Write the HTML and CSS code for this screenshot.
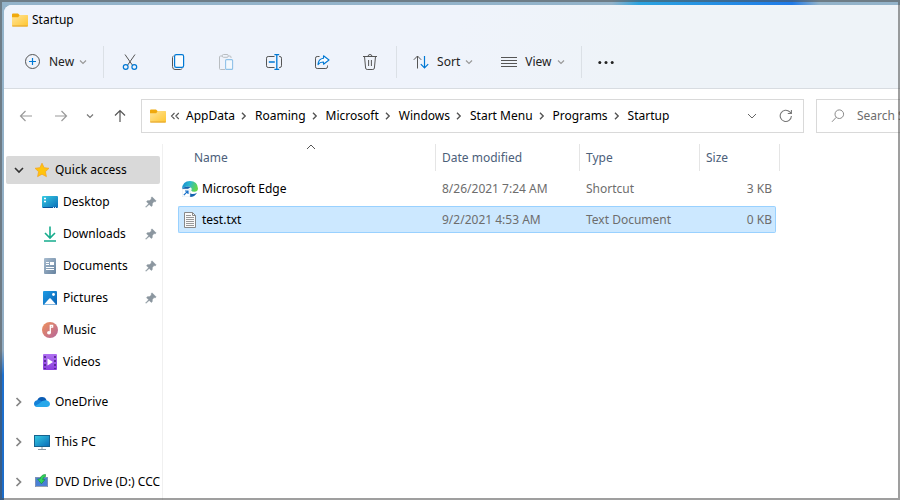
FILE: index.html
```html
<!DOCTYPE html>
<html lang="en">
<head>
    <meta charset="UTF-8">
    <meta name="viewport" content="width=device-width, initial-scale=1.0">
    <title>Startup</title>
    <link rel="stylesheet" href="styles.css">
</head>
<body>
    <svg class="defs" width="0" height="0" aria-hidden="true">
        <defs>
            <linearGradient id="folderFill" x1="0" y1="0" x2="1" y2="1">
                <stop offset="0" stop-color="#ffe49a"/><stop offset="1" stop-color="#ffc62e"/>
            </linearGradient>
            <linearGradient id="screenFill" x1="0" y1="0" x2="1" y2="1">
                <stop offset="0" stop-color="#36cbe2"/><stop offset="1" stop-color="#0a6cb8"/>
            </linearGradient>
            <linearGradient id="docFill" x1="0" y1="0" x2="1" y2="1">
                <stop offset="0" stop-color="#a9bdd0"/><stop offset="1" stop-color="#66829f"/>
            </linearGradient>
            <linearGradient id="picFill" x1="0" y1="0" x2="1" y2="1">
                <stop offset="0" stop-color="#1e9be4"/><stop offset="1" stop-color="#0a62b4"/>
            </linearGradient>
            <linearGradient id="musicFill" x1="0" y1="0" x2="1" y2="1">
                <stop offset="0" stop-color="#f0925a"/><stop offset="1" stop-color="#b4659c"/>
            </linearGradient>
            <linearGradient id="videoFill" x1="0" y1="0" x2="0" y2="1">
                <stop offset="0" stop-color="#b070f2"/><stop offset="1" stop-color="#8a3fdc"/>
            </linearGradient>
            <linearGradient id="edgeFill" x1="0" y1="0" x2="1" y2="0.3">
                <stop offset="0" stop-color="#1583d0"/><stop offset="0.5" stop-color="#2bb8cf"/><stop offset="1" stop-color="#62d64c"/>
            </linearGradient>
            <symbol id="folder" viewBox="0 0 16 14">
                <path d="M0 1.5Q0 0.5 1 0.5H6L8 2.5H15Q16 2.5 16 3.5V8H0z" fill="#f0a90c"/>
                <path d="M0 4.2H6.2L7.8 2H15Q16 2 16 3V12.5Q16 13.5 15 13.5H1Q0 13.5 0 12.5z" fill="url(#folderFill)"/>
                <path d="M0.3 13H15.7" stroke="#e2a22a" stroke-width="1"/>
            </symbol>
            <symbol id="down" viewBox="0 0 8 8">
                <path d="M1 2.5L4 5.5L7 2.5" fill="none" stroke="currentColor" stroke-width="1.2"/>
            </symbol>
            <symbol id="right" viewBox="0 0 8 8">
                <path d="M2 0.8L5.2 4L2 7.2" fill="none" stroke="currentColor" stroke-width="1.4"/>
            </symbol>
            <symbol id="pin" viewBox="0 0 12 12">
                <path d="M7 0.8L11.2 5L10.2 5.8L9 5.6L7.4 7.4L7.2 9.8L6.2 10.4L4.2 8.4L1 11.3L0.6 11L3.6 7.8L1.6 5.8L2.2 4.8L4.6 4.6L6.4 3L6.2 1.8z" fill="#8b969f" stroke="#8b969f" stroke-width="0.5"/>
            </symbol>
        </defs>
    </svg>

    <div class="window">
        <header class="top">
            <div class="title">
                <svg width="16" height="14"><use href="#folder"/></svg>
                <span>Startup</span>
            </div>
            <div class="toolbar">
                <button type="button" class="tool-menu">
                    <svg width="16" height="16" viewBox="0 0 16 16" fill="none"><circle cx="7.5" cy="7.5" r="7" stroke="#555"/><path d="M7.5 4V11M4 7.5H11" stroke="#0078d4" stroke-width="1.2"/></svg>
                    <span>New</span>
                    <svg class="chevron" width="8" height="8"><use href="#down"/></svg>
                </button>
                <span class="separator"></span>
                <div class="tools">
                    <button type="button" class="tool" aria-label="Cut">
                        <svg width="16" height="16" viewBox="0 0 16 16" fill="none"><path d="M3 0.5L10.3 11M13 0.5L5.7 11" stroke="#555"/><g stroke="#0078d4" stroke-width="1.2"><circle cx="3.7" cy="13" r="2.4"/><circle cx="12.3" cy="13" r="2.4"/></g></svg>
                    </button>
                    <button type="button" class="tool" aria-label="Copy">
                        <svg width="16" height="16" viewBox="0 0 16 16" fill="none"><path d="M3.5 2Q2.5 2.3 2.5 3.5V12.5Q2.5 15.5 5 15.5H10.5Q11.7 15.5 12 14.5" stroke="#555"/><rect x="4.6" y="0.6" width="9" height="12.8" rx="1.6" fill="#fafcfe" stroke="#0078d4" stroke-width="1.2"/></svg>
                    </button>
                    <button type="button" class="tool" aria-label="Paste" disabled>
                        <svg width="16" height="16" viewBox="0 0 16 16" fill="none"><path d="M7 15.5H2.5Q1.5 15.5 1.5 14.5V3Q1.5 2 2.5 2H4M10.5 2H12Q13 2 13 3V4" stroke="#b9bdc1"/><rect x="4.3" y="0.5" width="6" height="2.8" rx="1.2" stroke="#b9bdc1"/><rect x="7.6" y="5.6" width="7" height="9.8" rx="1" fill="#f3f8fd" stroke="#8fc1e8" stroke-width="1.1"/></svg>
                    </button>
                    <button type="button" class="tool" aria-label="Rename">
                        <svg width="16" height="16" viewBox="0 0 16 16" fill="none"><path d="M8.5 2.5H2.2Q0.5 2.5 0.5 4.2V11.8Q0.5 13.5 2.2 13.5H8.5M13 2.5H13.8Q15.5 2.5 15.5 4.2V11.8Q15.5 13.5 13.8 13.5H13" stroke="#555"/><path d="M2.8 8H8.8M10.8 0.6V15.4M8.4 0.6H13.2M8.4 15.4H13.2" stroke="#0078d4" stroke-width="1.3"/></svg>
                    </button>
                    <button type="button" class="tool" aria-label="Share">
                        <svg width="16" height="16" viewBox="0 0 16 16" fill="none"><path d="M5.5 2.5H3.2Q1.5 2.5 1.5 4.2V12.8Q1.5 14.5 3.2 14.5H11.8Q13.5 14.5 13.5 12.8V11.5" stroke="#555"/><path d="M9.5 1.8L15 6L9.5 10.2V8Q6 7.8 4 10.6Q4.3 4.9 9.5 4.2z" fill="#fafcfe" stroke="#0078d4" stroke-width="1.1" stroke-linejoin="round"/></svg>
                    </button>
                    <button type="button" class="tool" aria-label="Delete">
                        <svg width="16" height="16" viewBox="0 0 16 16" fill="none" stroke="#555"><path d="M1 2.5H15M2.5 2.5L3.6 14Q3.8 15.5 5.2 15.5H10.8Q12.2 15.5 12.4 14L13.5 2.5M6 2.3Q6.2 0.5 8 0.5Q9.8 0.5 10 2.3M6.6 6V12M9.4 6V12"/></svg>
                    </button>
                </div>
                <span class="separator"></span>
                <button type="button" class="tool-menu">
                    <svg width="16" height="16" viewBox="0 0 16 16" fill="none"><path d="M4.5 14.5V2M0.8 5.8L4.5 2L8.2 5.8" stroke="#555"/><path d="M11.5 2V14M7.8 10.2L11.5 14L15.2 10.2" stroke="#0078d4" stroke-width="1.2"/></svg>
                    <span>Sort</span>
                    <svg class="chevron" width="8" height="8"><use href="#down"/></svg>
                </button>
                <button type="button" class="tool-menu view">
                    <svg width="16" height="16" viewBox="0 0 16 16"><path d="M0 3.5H16M0 6.5H16M0 9.5H16M0 12.5H16" stroke="#555"/></svg>
                    <span>View</span>
                    <svg class="chevron" width="8" height="8"><use href="#down"/></svg>
                </button>
                <span class="separator"></span>
                <button type="button" class="tool-menu" aria-label="See more">
                    <svg width="16" height="16" viewBox="0 0 16 16" fill="#222"><circle cx="1.8" cy="8.5" r="1.5"/><circle cx="8" cy="8.5" r="1.5"/><circle cx="14.2" cy="8.5" r="1.5"/></svg>
                </button>
            </div>
        </header>

        <div class="address-row">
            <nav class="history">
                <button type="button" aria-label="Back"><svg width="14" height="14" viewBox="0 0 14 14" fill="none" stroke="#9a9a9a" stroke-width="1.2"><path d="M13 7H1.5M6.5 2L1.5 7L6.5 12"/></svg></button>
                <button type="button" aria-label="Forward"><svg width="14" height="14" viewBox="0 0 14 14" fill="none" stroke="#9a9a9a" stroke-width="1.2"><path d="M1 7H12.5M7.5 2L12.5 7L7.5 12"/></svg></button>
                <button type="button" class="recent" aria-label="Recent locations"><svg width="8" height="8"><use href="#down"/></svg></button>
                <button type="button" aria-label="Up"><svg width="14" height="14" viewBox="0 0 14 14" fill="none" stroke="#555" stroke-width="1.2"><path d="M7 13V1.5M2 6.5L7 1.5L12 6.5"/></svg></button>
            </nav>
            <div class="address">
                <svg width="16" height="14"><use href="#folder"/></svg>
                <svg class="overflow" width="10" height="8" viewBox="0 0 10 8" fill="none" stroke="#555" stroke-width="1.1"><path d="M4.5 1L1.5 4L4.5 7M8.8 1L5.8 4L8.8 7"/></svg>
                <ol class="crumbs">
                    <li><a href="#">AppData</a></li>
                    <li><svg width="8" height="8"><use href="#right"/></svg><a href="#">Roaming</a></li>
                    <li><svg width="8" height="8"><use href="#right"/></svg><a href="#">Microsoft</a></li>
                    <li><svg width="8" height="8"><use href="#right"/></svg><a href="#">Windows</a></li>
                    <li><svg width="8" height="8"><use href="#right"/></svg><a href="#">Start Menu</a></li>
                    <li><svg width="8" height="8"><use href="#right"/></svg><a href="#">Programs</a></li>
                    <li><svg width="8" height="8"><use href="#right"/></svg><a href="#">Startup</a></li>
                </ol>
                <button type="button" aria-label="Previous locations"><svg width="10" height="10" viewBox="0 0 10 10" fill="none" stroke="#666"><path d="M1 3L5 7L9 3"/></svg></button>
                <button type="button" aria-label="Refresh"><svg width="14" height="14" viewBox="0 0 14 14" fill="none" stroke="#777" stroke-width="1.1"><path d="M12.4 7A5.6 5.6 0 1 1 10.8 2.9L12.2 4.2M12.4 1V4.5H8.8"/></svg></button>
            </div>
            <label class="search">
                <svg width="14" height="14" viewBox="0 0 14 14" fill="none" stroke="#888"><circle cx="8.3" cy="5.2" r="4.3"/><path d="M5.2 8.3L1 12.8"/></svg>
                <input type="text" aria-label="Search Startup" placeholder="Search Startup">
            </label>
        </div>

        <div class="main">
            <aside class="sidebar">
                <a href="#" class="node selected">
                    <svg class="arrow open" width="10" height="10" viewBox="0 0 10 10" fill="none" stroke="#333" stroke-width="1.6"><path d="M1 3L5 7L9 3"/></svg>
                    <svg width="16" height="16" viewBox="0 0 16 16"><path d="M8 1.2L10.1 5.7L15 6.3L11.4 9.7L12.4 14.6L8 12.2L3.6 14.6L4.6 9.7L1 6.3L5.9 5.7z" fill="#ffc40c" stroke="#f5a623" stroke-width="0.8" stroke-linejoin="round"/></svg>
                    <span>Quick access</span>
                </a>
                <ul class="pinned">
                    <li><a href="#" class="item">
                        <svg width="16" height="16" viewBox="0 0 16 16"><rect y="2" width="16" height="12" rx="1" fill="url(#screenFill)"/><path d="M2 4.5H4M2 7.5H4" stroke="#fff" stroke-width="1.6"/><path d="M1 13.5H15" stroke="#08529a"/><path d="M11 13.5H12M13 13.5H14" stroke="#cfe8ff"/></svg>
                        <span>Desktop</span>
                        <svg class="pin" width="12" height="12"><use href="#pin"/></svg>
                    </a></li>
                    <li><a href="#" class="item">
                        <svg width="16" height="16" viewBox="0 0 16 16" fill="none" stroke="#16ac8d" stroke-width="1.6"><path d="M8 0.5V12M3 7L8 12L13 7M2 15H14"/></svg>
                        <span>Downloads</span>
                        <svg class="pin" width="12" height="12"><use href="#pin"/></svg>
                    </a></li>
                    <li><a href="#" class="item">
                        <svg width="16" height="16" viewBox="0 0 16 16"><rect x="2" width="12" height="16" rx="1" fill="url(#docFill)"/><path d="M4 4.5H7M4 6.5H7M4 9.5H12M4 11.5H12" stroke="#fff"/><rect x="8" y="4" width="4" height="3" fill="#fff"/></svg>
                        <span>Documents</span>
                        <svg class="pin" width="12" height="12"><use href="#pin"/></svg>
                    </a></li>
                    <li><a href="#" class="item">
                        <svg width="16" height="16" viewBox="0 0 16 16"><rect x="1" y="1" width="14" height="14" rx="1" fill="url(#picFill)"/><path d="M2 14.5L7.3 8.6Q8 8 8.7 8.6L14 14.5z" fill="#fff"/><circle cx="11.5" cy="4.5" r="1.4" fill="#fff"/></svg>
                        <span>Pictures</span>
                        <svg class="pin" width="12" height="12"><use href="#pin"/></svg>
                    </a></li>
                    <li><a href="#" class="item">
                        <svg width="16" height="16" viewBox="0 0 16 16"><circle cx="8" cy="8" r="8" fill="url(#musicFill)"/><ellipse cx="7" cy="10.8" rx="2" ry="1.8" fill="#fff"/><path d="M8.3 11V3.4H10.6V5.2H8.9" fill="none" stroke="#fff" stroke-width="1.3"/></svg>
                        <span>Music</span>
                    </a></li>
                    <li><a href="#" class="item">
                        <svg width="16" height="16" viewBox="0 0 16 16"><rect x="1" width="14" height="16" rx="1" fill="url(#videoFill)"/><path d="M3 2V15M13 2V15" stroke="#4b2186" stroke-width="1.6" stroke-dasharray="2 2"/><path d="M5.5 4.5L11 8L5.5 11.5z" fill="#fff"/></svg>
                        <span>Videos</span>
                    </a></li>
                </ul>
                <a href="#" class="node">
                    <svg class="arrow" width="10" height="10"><use href="#right"/></svg>
                    <svg width="16" height="16" viewBox="0 0 16 16"><path d="M3 8Q3.4 3 8 3Q11.6 3 12.6 6.4L8 10z" fill="#0a5cb4"/><path d="M3.5 6.2Q6 5.6 8 7.6L13 12.8H3.4Q0 12.5 0 9.4Q0.3 6.6 3.5 6.2z" fill="#1481d8"/><path d="M6 9Q8 6 12 6.2Q15.7 6.8 16 10Q15.7 13 12.6 13H3.6Q2 13 1 12z" fill="#28a8ea"/></svg>
                    <span>OneDrive</span>
                </a>
                <a href="#" class="node">
                    <svg class="arrow" width="10" height="10"><use href="#right"/></svg>
                    <svg width="16" height="16" viewBox="0 0 16 16"><rect x="0.5" y="1.5" width="15" height="11" fill="url(#screenFill)" stroke="#17638f"/><path d="M8 13V15M4 15.5H12" stroke="#8c9aa5"/></svg>
                    <span>This PC</span>
                </a>
                <a href="#" class="node">
                    <svg class="arrow" width="10" height="10"><use href="#right"/></svg>
                    <svg width="16" height="16" viewBox="0 0 16 16"><rect x="1.5" y="3.5" width="12" height="9" fill="#4a80d6" stroke="#7d92b8"/><path d="M2 12.5H13" stroke="#9aa5b4"/><path d="M11.5 0.5Q7 0.5 6 5H3.6L7.4 9.8L11 5.6H8.6Q9 3 11.5 2.6z" fill="#2fd65a" stroke="#138a34" stroke-width="0.6"/></svg>
                    <span>DVD Drive (D:) CCCO</span>
                </a>
            </aside>

            <section class="files">
                <table>
                    <colgroup>
                        <col class="col-name"><col class="col-date"><col class="col-type"><col class="col-size"><col class="col-end">
                    </colgroup>
                    <thead>
                        <tr>
                            <th class="name"><svg class="sort-mark" width="10" height="6" viewBox="0 0 10 6" fill="none" stroke="#555"><path d="M1 5L5 1L9 5"/></svg>Name</th>
                            <th>Date modified</th>
                            <th>Type</th>
                            <th>Size</th>
                            <td></td>
                        </tr>
                    </thead>
                    <tbody>
                        <tr>
                            <td class="file"><div>
                                <svg width="16" height="16" viewBox="0 0 16 16"><path d="M0 8Q0.5 0.2 8 0Q15.6 0.4 16 7.4Q15.8 10.6 12.4 10.8Q9.4 10.8 9.2 9.4Q10.4 8.2 9 6.6Q7.6 5.2 5.4 5.4Q1.6 5.6 0 8z" fill="url(#edgeFill)"/><path d="M0 8Q1.6 5.4 5.4 5.4Q7.6 5.2 9 6.6Q6.4 6.4 6 9Q6.4 12.4 10 13Q12.8 13.2 15 11.8Q12.8 16 8 16Q0.4 15.6 0 8z" fill="#1462ae"/><rect y="8" width="8" height="8" fill="#fff" stroke="#c8d4de" stroke-width="0.5"/><path d="M1.8 14.2L5.8 10.2M3 10H6V13" fill="none" stroke="#1670c8" stroke-width="1.2"/></svg>
                                <span>Microsoft Edge</span>
                            </div></td>
                            <td>8/26/2021 7:24 AM</td>
                            <td>Shortcut</td>
                            <td class="size">3 KB</td>
                        </tr>
                        <tr class="selected">
                            <td class="file"><div>
                                <svg width="16" height="16" viewBox="0 0 16 16"><path d="M2.5 0.5H10.5L13.5 3.5V15.5H2.5z" fill="#fafafa" stroke="#888"/><path d="M10.5 0.5V3.5H13.5" fill="none" stroke="#888"/><path d="M4 3.5H9M4 5.5H12M4 7.5H12M4 9.5H12M4 11.5H12M4 13.5H12" stroke="#999"/></svg>
                                <span>test.txt</span>
                            </div></td>
                            <td>9/2/2021 4:53 AM</td>
                            <td>Text Document</td>
                            <td class="size">0 KB</td>
                        </tr>
                    </tbody>
                </table>
            </section>
        </div>
    </div>
</body>
</html>
```
FILE: styles.css
```css
* {
    box-sizing: border-box;
}

body {
    margin: 0;
    padding: 5px 0 0 4px;
    height: 100vh;
    overflow: hidden;
    position: relative;
    display: flex;
    font-family: "Noto Sans", "Open Sans", sans-serif;
    font-size: 12px;
    line-height: 16px;
    color: #000;
    background:
        linear-gradient(90deg, transparent 68%, #2ba3e0 71%, #1f7ae8 88%, transparent 91%) top / 100% 5px no-repeat,
        linear-gradient(#93b3ca, #93aec4 70%, #1c70d0 75%, #1c6cc8);
}

/* frame drawn over the window edges */
body::after {
    content: "";
    position: absolute;
    inset: 0;
    border: 2px solid rgba(80, 80, 80, 0.55);
    pointer-events: none;
}

.defs {
    position: absolute;
}

svg {
    flex: none;
    display: block;
}

a {
    color: inherit;
    text-decoration: none;
}

button {
    display: flex;
    align-items: center;
    justify-content: center;
    flex: none;
    padding: 0;
    border: none;
    background: none;
    color: #222;
    font: inherit;
}

ul, ol {
    list-style: none;
    margin: 0;
    padding: 0;
}

.window {
    flex: 1;
    min-width: 0;
    display: flex;
    flex-direction: column;
    background: #fff;
    border-radius: 8px 0 0 0;
    overflow: hidden;
}

.top {
    background: linear-gradient(100deg, #eff3fb 50%, #eef3f8 70%);
    border-bottom: 1px solid #d8dce1;
}

.title {
    display: flex;
    align-items: center;
    gap: 4px;
    height: 30px;
    padding-left: 8px;
}

.toolbar {
    display: flex;
    align-items: center;
    height: 53px;
    padding-left: 21px;
}

.tool-menu {
    gap: 8px;
    height: 32px;
    margin-right: 16px;
}

.tool-menu .chevron {
    margin-left: -3px;
    color: #999;
}

.separator {
    width: 1px;
    height: 32px;
    background: #dbe0e6;
}

.separator + .tool-menu {
    margin-left: 16px;
}

.view {
    margin-left: 12px;
}

.tools {
    display: flex;
    gap: 16px;
    padding: 0 10px;
}

.tool {
    width: 32px;
    height: 32px;
}

.address-row {
    display: flex;
    padding: 10px 0 7px 4px;
}

.history {
    display: flex;
    align-items: center;
    margin-right: 4px;
}

.history button {
    width: 35px;
    height: 32px;
}

.history .recent {
    width: 24px;
    color: #777;
}

.address {
    flex: 1;
    display: flex;
    align-items: center;
    height: 34px;
    padding: 0 0 0 8px;
    border: 1px solid #d9d9d9;
}

.overflow {
    margin: 0 6px 0 4px;
}

.crumbs {
    display: flex;
    flex: 1;
}

.crumbs li {
    display: flex;
    align-items: center;
    white-space: nowrap;
    color: #000;
}

.crumbs svg {
    margin: 0 7px 0 5px;
    color: #555;
}

.address button {
    width: 34px;
    height: 32px;
}

.search {
    display: flex;
    align-items: center;
    gap: 12px;
    width: 84px;
    height: 34px;
    margin-left: 12px;
    padding-left: 14px;
    border: 1px solid #d9d9d9;
    border-right: none;
}

.search input {
    flex: 1;
    min-width: 0;
    padding: 0;
    border: none;
    outline: none;
    background: none;
    font: inherit;
}

.search input::placeholder {
    color: #6d6d6d;
}

.main {
    flex: 1;
    min-height: 0;
    display: flex;
}

.sidebar {
    width: 159px;
    margin-top: 4px;
    padding: 12px 2px 0;
    border-right: 1px solid #f0f0f0;
    overflow: hidden;
}

.node,
.item {
    display: flex;
    align-items: center;
    height: 28px;
    white-space: nowrap;
    overflow: hidden;
}

.node {
    gap: 5px;
    padding-left: 8px;
    margin-bottom: 12px;
}

.node .arrow {
    margin-right: 5px;
    color: #858585;
}

.node.selected {
    margin-bottom: 4px;
    background: #d9d9d9;
    border-radius: 2px;
}

.pinned {
    display: flex;
    flex-direction: column;
    gap: 4px;
    margin-bottom: 12px;
}

.item {
    gap: 5px;
    padding: 0 3px 0 36px;
}

.item .pin {
    margin-left: auto;
}

.files {
    flex: 1;
    padding-left: 15px;
}

table {
    width: 602px;
    table-layout: fixed;
    border-collapse: separate;
    border-spacing: 0 4px;
    color: #6d6d6d;
}

.col-name {
    width: 258px;
}

.col-date {
    width: 144px;
}

.col-type {
    width: 120px;
}

.col-size {
    width: 76px;
}

.col-end {
    width: 4px;
}

th, td {
    height: 27px;
    padding: 0 6px;
    text-align: left;
    font-weight: normal;
    white-space: nowrap;
}

th {
    position: relative;
    color: #4c607a;
}

thead td {
    padding: 0;
}

.name {
    padding-left: 16px;
}

thead th:not(:nth-child(4)),
thead td {
    border-right: 1px solid #e5e5e5;
}

.sort-mark {
    position: absolute;
    top: 0;
    left: 128px;
}

.file {
    padding-left: 4px;
    color: #000;
}

.file div {
    display: flex;
    align-items: center;
    gap: 4px;
}

.size {
    padding-right: 4px;
    text-align: right;
}

tr.selected td {
    background: #cce8ff;
    border: solid #99d1ff;
    border-width: 1px 0;
}

tr.selected td:first-child {
    padding-left: 3px;
    border-left-width: 1px;
    border-radius: 2px 0 0 2px;
}

tr.selected td:last-child {
    padding-right: 3px;
    border-right-width: 1px;
    border-radius: 0 2px 2px 0;
}
```
